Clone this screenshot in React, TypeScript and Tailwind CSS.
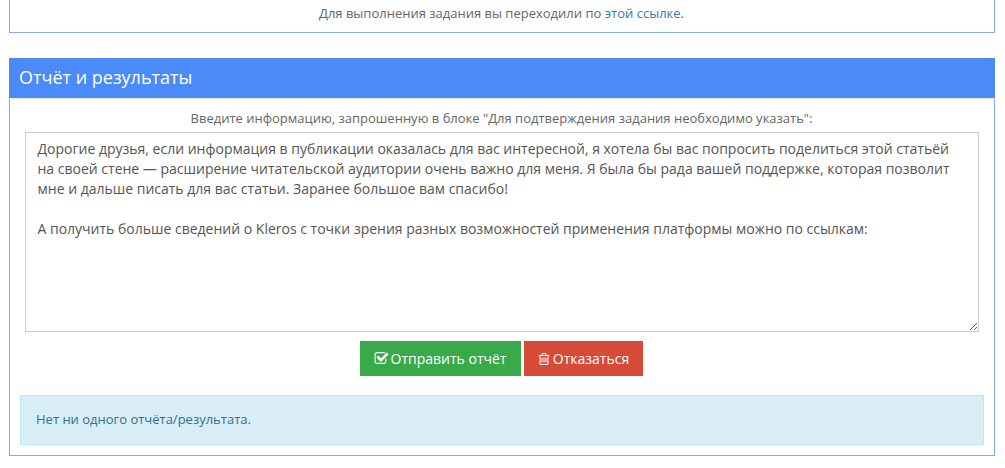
const reportText = `Дорогие друзья, если информация в публикации оказалась для вас интересной, я хотела бы вас попросить поделиться этой статьёй на своей стене — расширение читательской аудитории очень важно для меня. Я была бы рада вашей поддержке, которая позволит мне и дальше писать для вас статьи. Заранее большое вам спасибо!

А получить больше сведений о Kleros с точки зрения разных возможностей применения платформы можно по ссылкам:`;

function CheckSquareIcon() {
  return (
    <svg width="15" height="15" viewBox="0 0 1792 1792" fill="currentColor">
      <path d="M1472 930v318q0 119-84.5 203.5t-203.5 84.5h-832q-119 0-203.5-84.5t-84.5-203.5v-832q0-119 84.5-203.5t203.5-84.5h832q63 0 117 25 15 7 18 23 3 17-9 29l-49 49q-10 10-23 10-3 0-9-2-23-6-45-6h-832q-66 0-113 47t-47 113v832q0 66 47 113t113 47h832q66 0 113-47t47-113v-254q0-13 9-22l64-64q10-10 23-10 6 0 12 3 20 8 20 29zm231-489l-814 814q-24 24-57 24t-57-24l-430-430q-24-24-24-57t24-57l110-110q24-24 57-24t57 24l263 263 647-647q24-24 57-24t57 24l110 110q24 24 24 57t-24 57z" />
    </svg>
  );
}

function TrashIcon() {
  return (
    <svg width="14" height="14" viewBox="0 0 1792 1792" fill="currentColor">
      <path d="M704 736v576q0 14-9 23t-23 9h-64q-14 0-23-9t-9-23v-576q0-14 9-23t23-9h64q14 0 23 9t9 23zm256 0v576q0 14-9 23t-23 9h-64q-14 0-23-9t-9-23v-576q0-14 9-23t23-9h64q14 0 23 9t9 23zm256 0v576q0 14-9 23t-23 9h-64q-14 0-23-9t-9-23v-576q0-14 9-23t23-9h64q14 0 23 9t9 23zm128 724v-948h-896v948q0 22 7 40.5t14.5 27 10.5 8.5h832q3 0 10.5-8.5t14.5-27 7-40.5zm-672-1076h448l-48-117q-7-9-17-11h-317q-10 2-17 11zm928 32v64q0 14-9 23t-23 9h-96v948q0 83-47 143.5t-113 60.5h-832q-66 0-113-58.5t-47-141.5v-952h-96q-14 0-23-9t-9-23v-64q0-14 9-23t23-9h309l70-167q15-37 54-63t79-26h320q40 0 79 26t54 63l70 167h309q14 0 23 9t9 23z" />
    </svg>
  );
}

export default function App() {
  return (
    <div className="h-[468px] overflow-hidden bg-white pl-[9px] pr-[10px] font-['Open_Sans',sans-serif] text-[13px] text-[#666]">
      <section className="h-[33px] border border-t-0 border-[#7fa9f5] pr-[1px] pt-[4px] text-center leading-[18px]">
        <p>
          Для выполнения задания вы переходили по{" "}
          <a href="#" className="text-[#337ab7]">этой ссылке</a>.
        </p>
      </section>

      <section className="mt-[25px] h-[398px] border border-t-0 border-[#7fa9f5]">
        <h2 className="-mx-px flex h-[41px] items-center border-b border-[#e8eef8] bg-[#4a8bf9] px-[10px] pb-[2px] text-[18px] font-normal text-white">
          Отчёт и результаты
        </h2>
        <div className="px-[10px]">
          <p className="mt-[10px] pr-[1px] text-center leading-[18px]">
            Введите информацию, запрошенную в блоке "Для подтверждения задания необходимо указать":
          </p>
          <div className="px-[5px]">
            <textarea
              readOnly
              defaultValue={reportText}
              className="mt-[5px] block h-[200px] w-full border border-[#ccc] py-[6px] pl-[11.5px] pr-[12px] text-[14px] leading-[20px] text-[#555] outline-none"
            />
          </div>
          <div className="mt-[9px] flex justify-center gap-[3px] pr-[2px] text-[14px] text-white">
            <button className="flex h-[35px] w-[161px] items-center justify-center gap-[2px] bg-[#39aa4a]">
              <CheckSquareIcon />
              Отправить отчёт
            </button>
            <button className="flex h-[35px] w-[119px] items-center justify-center gap-[2px] bg-[#d84a38]">
              <TrashIcon />
              Отказаться
            </button>
          </div>
          <div className="mt-[19px] flex h-[50px] items-center border border-[#bce8f1] bg-[#d9edf7] pl-[15px] text-[#31708f]">
            Нет ни одного отчёта/результата.
          </div>
        </div>
      </section>
    </div>
  );
}
